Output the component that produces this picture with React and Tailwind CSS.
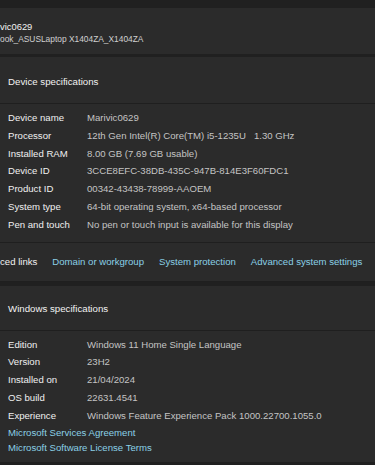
import React from 'react'

const deviceSpecs = [
  ['Device name', 'Marivic0629'],
  ['Processor', '12th Gen Intel(R) Core(TM) i5-1235U   1.30 GHz'],
  ['Installed RAM', '8.00 GB (7.69 GB usable)'],
  ['Device ID', '3CCE8EFC-38DB-435C-947B-814E3F60FDC1'],
  ['Product ID', '00342-43438-78999-AAOEM'],
  ['System type', '64-bit operating system, x64-based processor'],
  ['Pen and touch', 'No pen or touch input is available for this display'],
]

const windowsSpecs = [
  ['Edition', 'Windows 11 Home Single Language'],
  ['Version', '23H2'],
  ['Installed on', '21/04/2024'],
  ['OS build', '22631.4541'],
  ['Experience', 'Windows Feature Experience Pack 1000.22700.1055.0'],
]

const SpecRow = ({ label, value }) => (
  <div className="flex items-center h-[17.8px] whitespace-nowrap">
    <div className="w-[79px] shrink-0 text-[#f0f0f0]">{label}</div>
    <div className="text-[#c4c4c4] whitespace-pre">{value}</div>
  </div>
)

export default function App() {
  return (
    <div
      className="w-[375px] h-[465px] overflow-hidden bg-[#202020] pt-[8px] text-[9.6px] leading-none"
      style={{ fontFamily: '"Liberation Sans", Arial, sans-serif' }}
    >
      {/* Nombre del equipo */}
      <div className="h-[46px] bg-[#2b2b2b] flex flex-col pt-[14px] gap-[3.5px]">
        <div className="text-[9.4px] text-[#f2f2f2]">vic0629</div>
        <div className="text-[8.4px] text-[#d0d0d0]">ook_ASUSLaptop X1404ZA_X1404ZA</div>
      </div>

      {/* Device specifications */}
      <div className="mt-[3px] bg-[#2b2b2b]">
        <div className="h-[47px] px-2 pt-[3px] flex items-center text-[9.7px] text-[#f2f2f2] border-b border-[#1f1f1f]">
          Device specifications
        </div>
        <div className="px-2 pt-[5px] pb-[8px]">
          {deviceSpecs.map(([l, v]) => (
            <SpecRow key={l} label={l} value={v} />
          ))}
        </div>
        <div className="h-[40px] flex items-center gap-[15px] border-y border-[#1f1f1f] whitespace-nowrap">
          <span className="text-[#f2f2f2]">ced links</span>
          <span className="text-[#8ad0e6]">Domain or workgroup</span>
          <span className="text-[#8ad0e6]">System protection</span>
          <span className="text-[#8ad0e6]">Advanced system settings</span>
        </div>
      </div>

      {/* Windows specifications */}
      <div className="mt-[4px] bg-[#2b2b2b]">
        <div className="h-[45px] px-2 pt-[3px] flex items-center text-[9.7px] text-[#f2f2f2] border-b border-[#1f1f1f]">
          Windows specifications
        </div>
        <div className="px-2 pt-[5px] pb-[6px]">
          {windowsSpecs.map(([l, v]) => (
            <SpecRow key={l} label={l} value={v} />
          ))}
          <div className="text-[#8ad0e6] h-[15px] mt-[1px] flex items-center">Microsoft Services Agreement</div>
          <div className="text-[#8ad0e6] h-[15px] flex items-center">Microsoft Software License Terms</div>
        </div>
      </div>
    </div>
  )
}
